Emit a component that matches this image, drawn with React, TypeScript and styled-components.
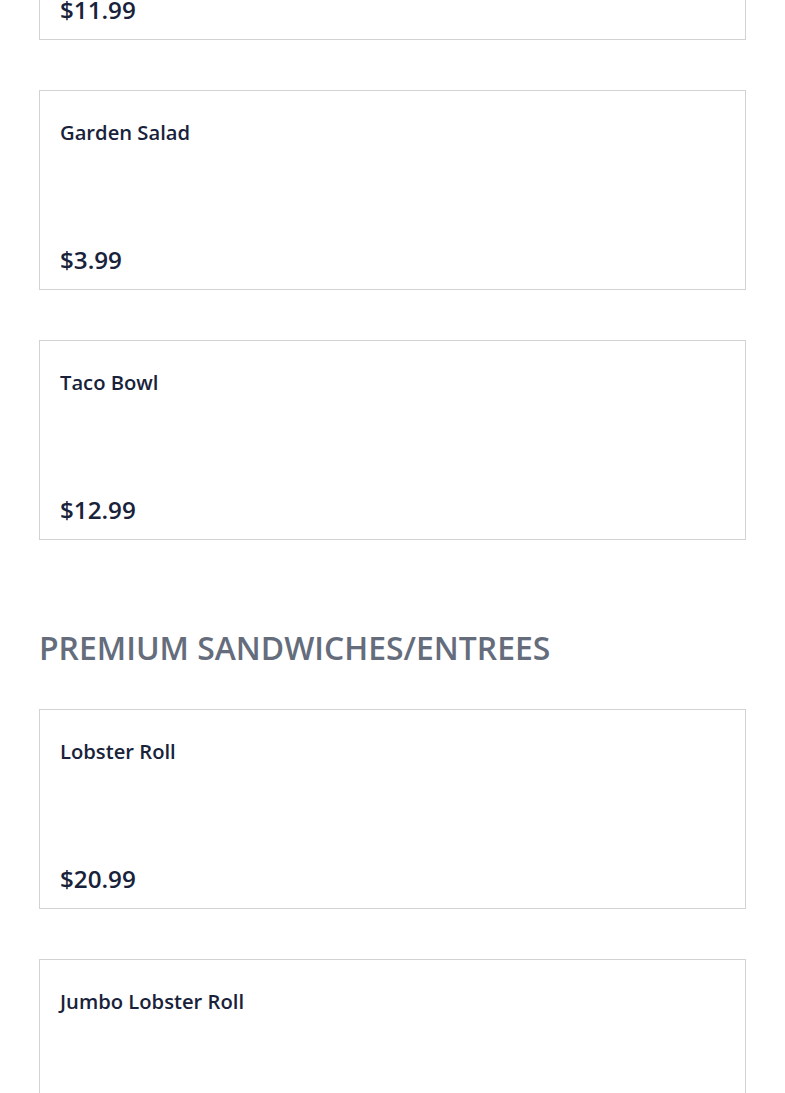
import React from 'react'
import styled, { createGlobalStyle } from 'styled-components'

const GlobalStyle = createGlobalStyle`
  html, body {
    margin: 0;
    padding: 0;
    background: #ffffff;
    font-family: 'Open Sans', 'Noto Sans', sans-serif;
  }
`

// The page is shown scrolled so that the first card is cut by the top edge
const Page = styled.div`
  margin-top: -160px;
  padding: 0 39px 40px;
`

const Section = styled.section`
  display: flex;
  flex-direction: column;
  gap: 50px;
`

const SectionTitle = styled.h2`
  margin: 89px 0 -8px;
  font-size: 31.9px;
  line-height: 38px;
  font-weight: 600;
  color: #656d7c;
  text-transform: uppercase;
`

const Card = styled.div`
  box-sizing: border-box;
  height: 200px;
  border: 1px solid #d2d2d2;
  padding: 26px 20px 11px;
  display: flex;
  flex-direction: column;
`

const ItemName = styled.h3`
  margin: 0;
  font-size: 20.2px;
  line-height: 30px;
  font-weight: 600;
  color: #18223a;
`

const Price = styled.div`
  margin-top: auto;
  font-size: 24.2px;
  line-height: 36px;
  font-weight: 600;
  color: #18223a;
`

type Item = { name: string; price: string }

const salads: Item[] = [
  { name: 'Chicken Caesar Salad', price: '$11.99' },
  { name: 'Garden Salad', price: '$3.99' },
  { name: 'Taco Bowl', price: '$12.99' },
]

const premium: Item[] = [
  { name: 'Lobster Roll', price: '$20.99' },
  { name: 'Jumbo Lobster Roll', price: '$29.99' },
]

const MenuCard = ({ item }: { item: Item }) => (
  <Card>
    <ItemName>{item.name}</ItemName>
    <Price>{item.price}</Price>
  </Card>
)

export default function App() {
  return (
    <>
      <GlobalStyle />
      <Page>
        <Section>
          {salads.map((item) => (
            <MenuCard key={item.name} item={item} />
          ))}
        </Section>
        <Section>
          <SectionTitle>Premium Sandwiches/Entrees</SectionTitle>
          {premium.map((item) => (
            <MenuCard key={item.name} item={item} />
          ))}
        </Section>
      </Page>
    </>
  )
}
